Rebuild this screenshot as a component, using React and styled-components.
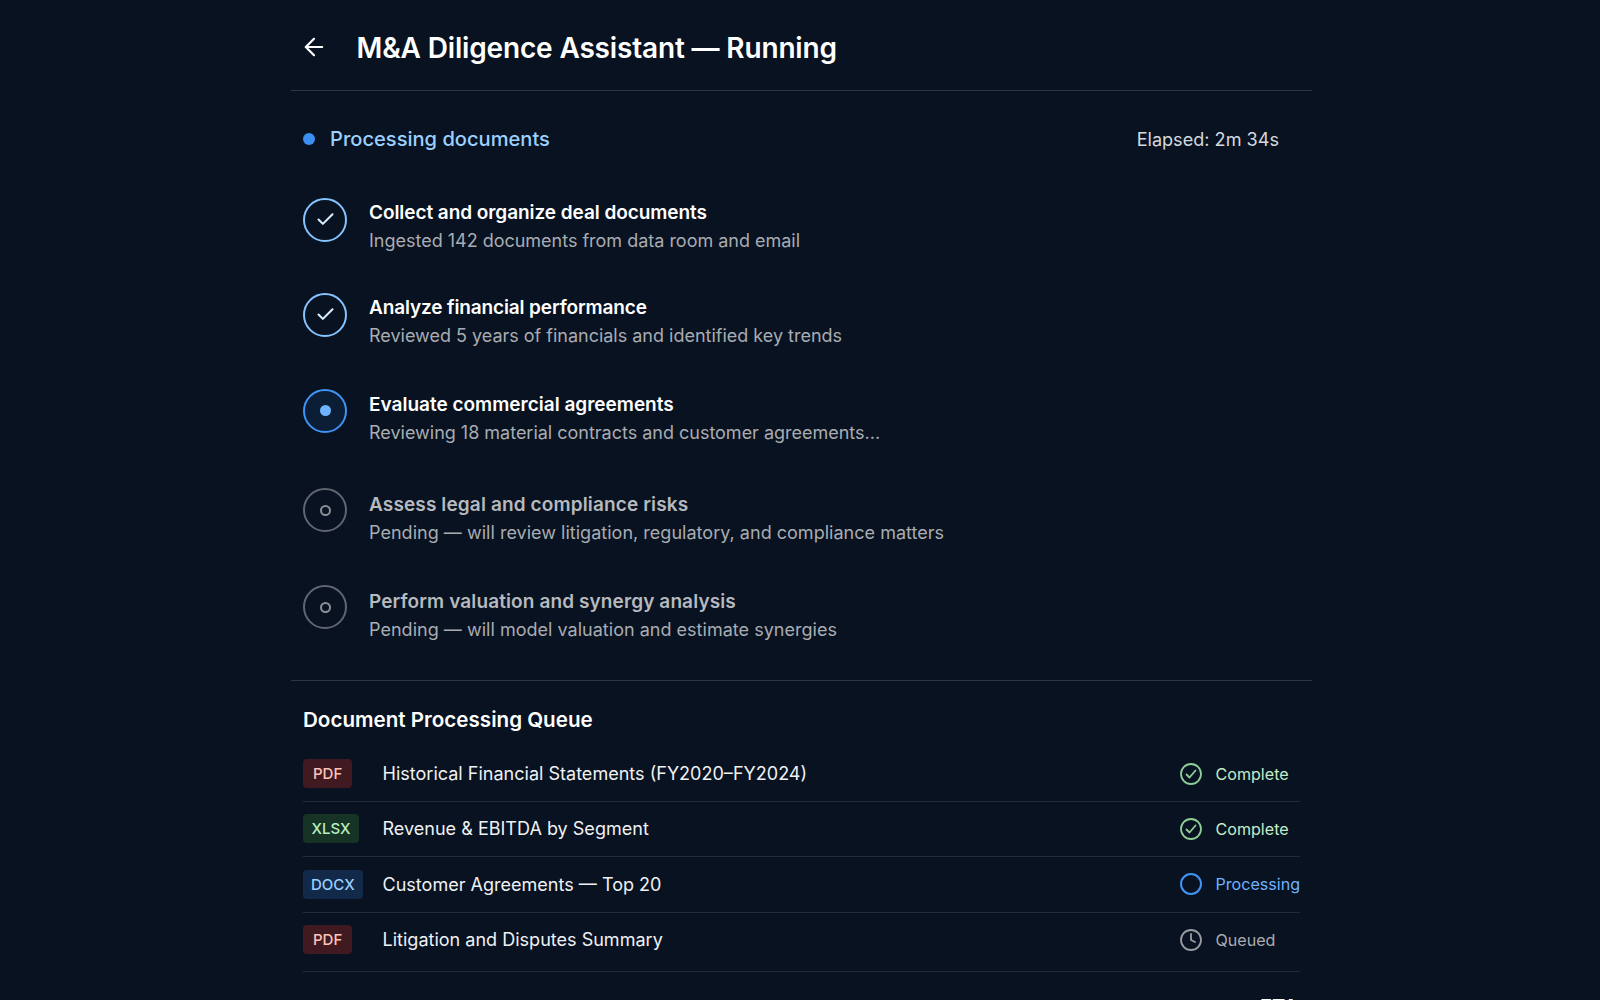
import React from "react";
import styled, { createGlobalStyle } from "styled-components";
import { ArrowLeft, Check, Clock } from "lucide-react";

const GlobalStyle = createGlobalStyle`
  html, body {
    margin: 0;
    height: 100%;
    overflow: hidden;
    background: #081221;
    font-family: Inter, "Liberation Sans", sans-serif;
  }
`;

const Page = styled.div`
  width: 1021px;
  height: 1000px;
  overflow: hidden;
  margin-left: 291px;
`;

const Header = styled.header`
  height: 91px;
  box-sizing: border-box;
  display: flex;
  align-items: center;
  gap: 28.5px;
  padding: 4px 12px 0;
  border-bottom: 1px solid #2d3743;
`;

const BackIcon = styled(ArrowLeft)`
  width: 28px;
  height: 28px;
  color: #fff;
  margin-left: -3px;
`;

const Title = styled.h1`
  margin: 2px 0 0;
  font-size: 28px;
  font-weight: 600;
  letter-spacing: -0.16px;
  color: #fff;
`;

const StatusBar = styled.div`
  display: flex;
  align-items: center;
  justify-content: space-between;
  padding: 37px 33px 0 12px;
  height: 22px;
`;

const StatusLabel = styled.div`
  display: flex;
  align-items: center;
  gap: 15px;
  color: #9bd0ff;
  font-size: 20.1px;
  font-weight: 500;
`;

const StatusDot = styled.span`
  width: 12px;
  height: 12px;
  border-radius: 50%;
  background: #3b8ff0;
`;

const Elapsed = styled.span`
  color: #d5d9de;
  font-size: 18.1px;
`;

const Steps = styled.div`
  display: flex;
  flex-direction: column;
  padding: 47.5px 12px 0;
`;

const Step = styled.div`
  display: flex;
  align-items: flex-start;
  gap: 22px;
  height: ${(p) => p.$height}px;
`;

const circleBorders = { done: "#86c4ff", active: "#3f94f5", pending: "#60666f" };
const textOffsets = { done: 3, active: 4, pending: 4.5 };

const StepCircle = styled.span`
  width: 44px;
  height: 44px;
  flex: none;
  box-sizing: border-box;
  border-radius: 50%;
  display: flex;
  align-items: center;
  justify-content: center;
  border: 2px solid ${(p) => circleBorders[p.$state]};
  background: ${(p) => (p.$state === "active" ? "#0c1e36" : "transparent")};
  color: #d9edff;
`;

const InnerDot = styled.span`
  width: 11px;
  height: 11px;
  border-radius: 50%;
  background: #6db3ff;
`;

const InnerRing = styled.span`
  width: 11px;
  height: 11px;
  box-sizing: border-box;
  border-radius: 50%;
  border: 2.4px solid #8b8f96;
`;

const StepText = styled.div`
  display: flex;
  flex-direction: column;
  gap: 4px;
  padding-top: ${(p) => textOffsets[p.$state]}px;
`;

const StepTitle = styled.div`
  font-size: 19px;
  line-height: 24px;
  font-weight: 600;
  letter-spacing: ${(p) => p.$tracking}px;
  color: ${(p) => (p.$pending ? "#b6b9be" : "#fff")};
`;

const StepDesc = styled.div`
  font-size: 18px;
  line-height: 23px;
  letter-spacing: ${(p) => (p.$pending ? "0.02px" : "-0.01px")};
  color: #a9acb1;
`;

const Queue = styled.section`
  border-top: 1px solid #2d3743;
  padding: 26px 12px 0;
`;

const QueueTitle = styled.h2`
  margin: 0 0 13px;
  font-size: 20.6px;
  line-height: 26px;
  font-weight: 600;
  color: #fff;
`;

const RowList = styled.div`
  display: flex;
  flex-direction: column;
`;

const Row = styled.div`
  height: 55.4px;
  box-sizing: border-box;
  display: flex;
  align-items: center;
  border-bottom: 1px solid #222b37;
  &:last-child {
    height: 59px;
    padding-bottom: 4px;
  }
`;

const badgeStyles = {
  PDF: { bg: "#401a20", fg: "#ffc2b8", pad: 10 },
  XLSX: { bg: "#173325", fg: "#b6efbe", pad: 8.5 },
  DOCX: { bg: "#12294a", fg: "#9bd0ff", pad: 8 },
};

const BadgeCell = styled.div`
  width: 79.5px;
  flex: none;
`;

const Badge = styled.span`
  display: inline-block;
  height: 29px;
  line-height: 29px;
  padding: 0 ${(p) => badgeStyles[p.$type].pad}px;
  border-radius: 4px;
  font-size: 15px;
  font-weight: 500;
  background: ${(p) => badgeStyles[p.$type].bg};
  color: ${(p) => badgeStyles[p.$type].fg};
`;

const FileName = styled.div`
  flex: 1;
  font-size: 18.05px;
  color: #f0f1f3;
`;

const RowStatus = styled.div`
  width: 121px;
  flex: none;
  display: flex;
  align-items: center;
  gap: 12.5px;
  font-size: 16.1px;
  white-space: nowrap;
  color: ${(p) => p.$color};
`;

const EmptyCircle = styled.span`
  width: 22px;
  height: 22px;
  margin: 0 1px;
  box-sizing: border-box;
  flex: none;
  border-radius: 50%;
  border: 2px solid #3f94f5;
`;

const Footer = styled.div`
  margin-top: 22.5px;
  padding-right: 2px;
  text-align: right;
  font-size: 20px;
  line-height: 26px;
  font-weight: 600;
  color: #fff;
`;

const steps = [
  { title: "Collect and organize deal documents", desc: "Ingested 142 documents from data room and email", state: "done", height: 95, tracking: -0.06 },
  { title: "Analyze financial performance", desc: "Reviewed 5 years of financials and identified key trends", state: "done", height: 96.4, tracking: -0.13 },
  { title: "Evaluate commercial agreements", desc: "Reviewing 18 material contracts and customer agreements...", state: "active", height: 99.5, tracking: 0 },
  { title: "Assess legal and compliance risks", desc: "Pending — will review litigation, regulatory, and compliance matters", state: "pending", height: 97, tracking: 0.13 },
  { title: "Perform valuation and synergy analysis", desc: "Pending — will model valuation and estimate synergies", state: "pending", height: 95, tracking: 0.11 },
];

const docs = [
  { type: "PDF", name: "Historical Financial Statements (FY2020–FY2024)", status: "Complete" },
  { type: "XLSX", name: "Revenue & EBITDA by Segment", status: "Complete" },
  { type: "DOCX", name: "Customer Agreements — Top 20", status: "Processing" },
  { type: "PDF", name: "Litigation and Disputes Summary", status: "Queued" },
];

const statusColors = { Complete: "#c3ecc6", Processing: "#6db3ff", Queued: "#a9acb1" };

const StatusIcon = ({ status }) => {
  if (status === "Complete") {
    return (
      <svg width="24" height="24" viewBox="0 0 24 24" fill="none" stroke="#8fce97" strokeWidth="1.8" strokeLinecap="round" strokeLinejoin="round">
        <circle cx="12" cy="12" r="10" />
        <path d="M7.5 12.5l3 3 6-7" />
      </svg>
    );
  }
  if (status === "Queued") return <Clock size={24} color="#9a9da2" strokeWidth={1.8} />;
  return <EmptyCircle />;
};

const App = () => (
  <Page>
    <GlobalStyle />
    <Header>
      <BackIcon strokeWidth={1.9} />
      <Title>M&amp;A Diligence Assistant — Running</Title>
    </Header>
    <StatusBar>
      <StatusLabel>
        <StatusDot />
        Processing documents
      </StatusLabel>
      <Elapsed>Elapsed: 2m 34s</Elapsed>
    </StatusBar>
    <Steps>
      {steps.map((s) => (
        <Step key={s.title} $height={s.height}>
          <StepCircle $state={s.state}>
            {s.state === "done" && <Check size={21} strokeWidth={2.4} />}
            {s.state === "active" && <InnerDot />}
            {s.state === "pending" && <InnerRing />}
          </StepCircle>
          <StepText $state={s.state}>
            <StepTitle $pending={s.state === "pending"} $tracking={s.tracking}>{s.title}</StepTitle>
            <StepDesc $pending={s.state === "pending"}>{s.desc}</StepDesc>
          </StepText>
        </Step>
      ))}
    </Steps>
    <Queue>
      <QueueTitle>Document Processing Queue</QueueTitle>
      <RowList>
        {docs.map((d) => (
          <Row key={d.name + d.type}>
            <BadgeCell>
              <Badge $type={d.type}>{d.type}</Badge>
            </BadgeCell>
            <FileName>{d.name}</FileName>
            <RowStatus $color={statusColors[d.status]}>
              <StatusIcon status={d.status} />
              {d.status}
            </RowStatus>
          </Row>
        ))}
      </RowList>
      <Footer>ETA</Footer>
    </Queue>
  </Page>
);

export default App;
